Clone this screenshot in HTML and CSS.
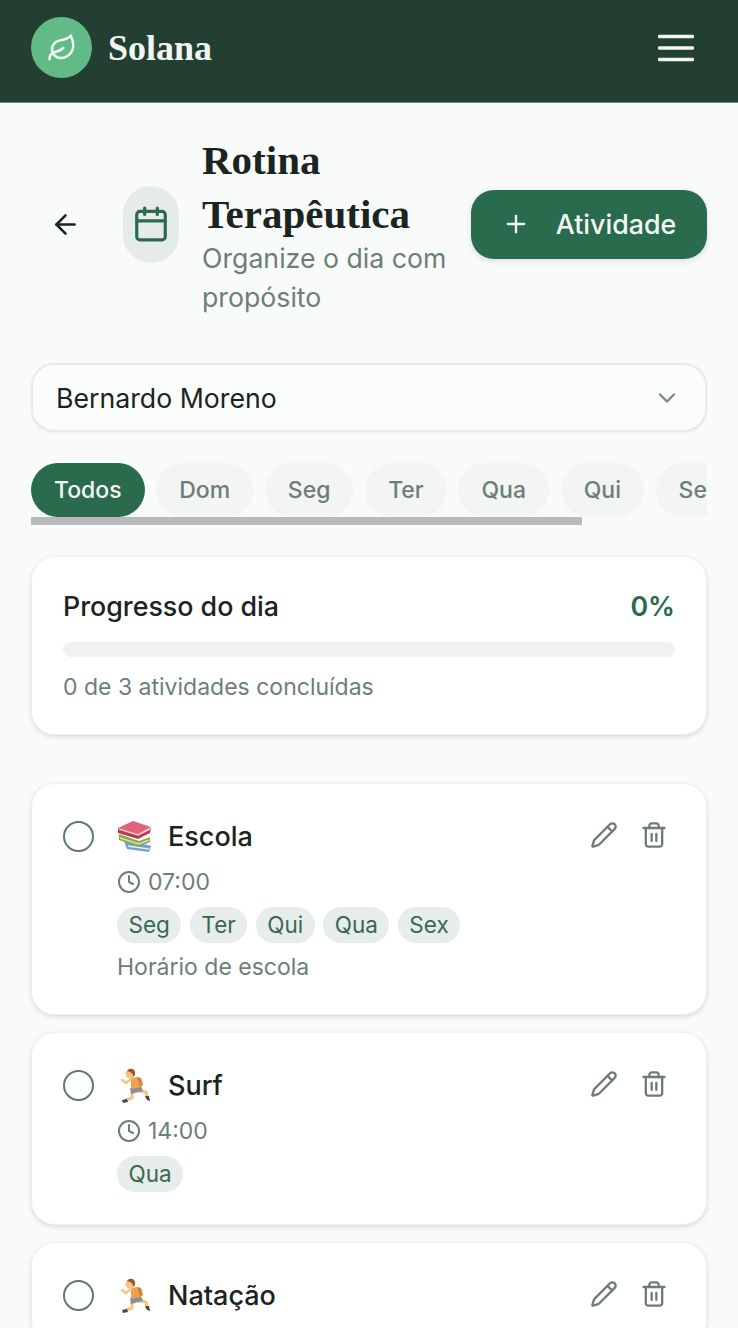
FILE: index.html
```html
<!DOCTYPE html>
<html lang="pt-BR">
<head>
  <meta charset="UTF-8" />
  <meta name="viewport" content="width=device-width, initial-scale=1.0"/>
  <title>Solana</title>
  <link rel="stylesheet" href="styles.css">
</head>
<body>
  <svg class="sprites" width="0" height="0">
    <symbol id="i-pencil" viewBox="0 0 24 24"><path d="M21.174 6.812a1 1 0 0 0-3.986-3.987L3.842 16.174a2 2 0 0 0-.5.83l-1.321 4.352a.5.5 0 0 0 .623.622l4.353-1.32a2 2 0 0 0 .83-.497z"/><path d="m15 5 4 4"/></symbol>
    <symbol id="i-trash" viewBox="0 0 24 24"><path d="M3 6h18"/><path d="M19 6v14c0 1-1 2-2 2H7c-1 0-2-1-2-2V6"/><path d="M8 6V4c0-1 1-2 2-2h4c1 0 2 1 2 2v2"/><path d="M10 11v6"/><path d="M14 11v6"/></symbol>
    <symbol id="i-clock" viewBox="0 0 24 24"><circle cx="12" cy="12" r="10"/><path d="M12 6v6l4 2"/></symbol>
    <symbol id="e-runner" viewBox="0 0 36 36">
      <path d="M15 25l0 6-6 2" fill="none" stroke="#f7c483" stroke-width="3" stroke-linecap="round" stroke-linejoin="round"/>
      <path d="M22 24l7 1 1 5" fill="none" stroke="#f7c483" stroke-width="3" stroke-linecap="round" stroke-linejoin="round"/>
      <path d="M5 33l5-1 1 3-5 1z" fill="#54463a"/>
      <path d="M28 29l4 0 1 5-3-1z" fill="#54463a"/>
      <path d="M13 21l11-2 2 5-12 3z" fill="#8d8d96"/>
      <path d="M14 11l7-1 1 1 2 9-10 2z" fill="#f0a050"/>
      <path d="M20 10l4 1 2 7-3 2z" fill="#d9803a"/>
      <path d="M14 12l-5 4-4-3" fill="none" stroke="#f7c483" stroke-width="2.400" stroke-linecap="round" stroke-linejoin="round"/>
      <circle cx="13" cy="7" r="4.500" fill="#f7c483"/>
      <path d="M10 4c2-3 7-3 8 1 .6 2-.6 4-1.500 5-.5-3-2-5-6.500-6z" fill="#a0522d"/>
    </symbol>
  </svg>

  <div class="screen">
    <header class="topbar">
      <div class="brand">
        <span class="brand-logo">
          <svg viewBox="0 0 24 24" class="stroke-icon"><path d="M11 20A7 7 0 0 1 9.8 6.1C15.5 5 17 4.48 19 2c1 2 2 4.18 2 8 0 5.5-4.78 10-10 10Z"/><path d="M2 21c0-3 1.85-5.36 5.08-6C9.5 14.52 12 13 13 12"/></svg>
        </span>
        <span class="brand-name">Solana</span>
      </div>
      <button class="menu-btn" aria-label="Menu">
        <svg viewBox="0 0 36 28" class="stroke-icon"><path d="M1.500 2.500h33"/><path d="M1.500 14h33"/><path d="M1.500 25.500h33"/></svg>
      </button>
    </header>

    <main class="content">
      <section class="page-head">
        <button class="back-btn" aria-label="Voltar">
          <svg viewBox="0 0 24 24" class="stroke-icon"><path d="m12 19-7-7 7-7"/><path d="M19 12H5"/></svg>
        </button>
        <span class="head-icon">
          <svg viewBox="0 0 24 24" class="stroke-icon"><path d="M8 2v4"/><path d="M16 2v4"/><rect x="3" y="4" width="18" height="18" rx="2"/><path d="M3 10h18"/></svg>
        </span>
        <div class="head-text">
          <h1>Rotina Terapêutica</h1>
          <p>Organize o dia com propósito</p>
        </div>
        <button class="add-btn">
          <svg viewBox="0 0 24 24" class="stroke-icon"><path d="M5 12h14"/><path d="M12 5v14"/></svg>
          Atividade
        </button>
      </section>

      <div class="person-select">
        <span>Bernardo Moreno</span>
        <svg viewBox="0 0 24 24" class="stroke-icon"><path d="m6 9 6 6 6-6"/></svg>
      </div>

      <div class="day-filter">
        <div class="day-list">
          <button class="day active">Todos</button>
          <button class="day">Dom</button>
          <button class="day">Seg</button>
          <button class="day">Ter</button>
          <button class="day">Qua</button>
          <button class="day">Qui</button>
          <button class="day">Sex</button>
        </div>
        <div class="day-scroll"></div>
      </div>

      <section class="card progress-card">
        <div class="progress-top">
          <span>Progresso do dia</span>
          <strong>0%</strong>
        </div>
        <div class="progress-track"></div>
        <p class="muted">0 de 3 atividades concluídas</p>
      </section>

      <div class="activities">
        <article class="card activity">
          <span class="check"></span>
          <div class="activity-body">
            <div class="activity-title">
              <svg viewBox="0 0 36 32" class="emoji">
                <path d="M7 21l24 4 3 1-2 6-22-3z" fill="#6f9fd8"/>
                <path d="M11 26l21 3" stroke="#e9eef2" stroke-width="1.500"/>
                <path d="M2 14l20 7 11-4 0 5-11 5-20-7z" fill="#87ab55"/>
                <path d="M3 18l19 6 10-4" fill="none" stroke="#e8d9a8" stroke-width="1.500"/>
                <path d="M1 8l20 6 13-6-1 5-12 6-20-6z" fill="#b93a55"/>
                <path d="M2 9l19 6 12-6" fill="none" stroke="#f1d9c9" stroke-width="1.500"/>
                <path d="M1 8l15-7 18 6-13 7z" fill="#e4607c"/>
              </svg>
              <h2>Escola</h2>
            </div>
            <div class="activity-time"><svg class="stroke-icon"><use href="#i-clock"/></svg>07:00</div>
            <div class="tags">
              <span>Seg</span><span>Ter</span><span>Qui</span><span>Qua</span><span>Sex</span>
            </div>
            <p class="muted note">Horário de escola</p>
          </div>
          <div class="activity-actions">
            <svg class="stroke-icon"><use href="#i-pencil"/></svg>
            <svg class="stroke-icon"><use href="#i-trash"/></svg>
          </div>
        </article>

        <article class="card activity">
          <span class="check"></span>
          <div class="activity-body">
            <div class="activity-title">
              <svg class="emoji runner"><use href="#e-runner"/></svg>
              <h2>Surf</h2>
            </div>
            <div class="activity-time"><svg class="stroke-icon"><use href="#i-clock"/></svg>14:00</div>
            <div class="tags">
              <span>Qua</span>
            </div>
          </div>
          <div class="activity-actions">
            <svg class="stroke-icon"><use href="#i-pencil"/></svg>
            <svg class="stroke-icon"><use href="#i-trash"/></svg>
          </div>
        </article>

        <article class="card activity">
          <span class="check"></span>
          <div class="activity-body">
            <div class="activity-title">
              <svg class="emoji runner"><use href="#e-runner"/></svg>
              <h2>Natação</h2>
            </div>
          </div>
          <div class="activity-actions">
            <svg class="stroke-icon"><use href="#i-pencil"/></svg>
            <svg class="stroke-icon"><use href="#i-trash"/></svg>
          </div>
        </article>
      </div>
    </main>
  </div>
</body>
</html>
```

FILE: styles.css
```css
:root {
  --bg-color: #f9fbfa;
  --dark-green: #233f31;
  --green: #2a6a4d;
  --text-color: #1a2420;
  --muted: #6c7f76;
  --soft: #e6edea;
  --line: #e7ebe9;
}

html, body {
  margin: 0;
  padding: 0;
  height: 100%;
  overflow: hidden;
  font-family: Inter, "Noto Sans", sans-serif;
  background-color: var(--bg-color);
  color: var(--text-color);
}

button {
  font-family: inherit;
  border: none;
  background: none;
  padding: 0;
}

.sprites {
  position: absolute;
}

.stroke-icon {
  fill: none;
  stroke: currentColor;
  stroke-width: 2;
  stroke-linecap: round;
  stroke-linejoin: round;
}

.screen {
  height: 1328px;
  overflow: hidden;
}

/* barra do topo */
.topbar {
  height: 103px;
  box-sizing: border-box;
  display: flex;
  align-items: center;
  justify-content: space-between;
  padding: 0 44px 7px 31px;
  background-color: var(--dark-green);
  border-bottom: 1px solid #6f8a7c;
}

.brand {
  display: flex;
  align-items: center;
  gap: 16px;
}

.brand-logo {
  width: 61px;
  height: 61px;
  border-radius: 50%;
  background-color: #62bb87;
  color: #f3faf6;
  display: flex;
  align-items: center;
  justify-content: center;
}

.brand-logo svg {
  width: 30px;
  height: 30px;
}

.brand-name {
  font-family: "Liberation Serif", serif;
  font-weight: 700;
  font-size: 36px;
  color: #f2f6f3;
}

.menu-btn {
  width: 36px;
  height: 28px;
  color: #f2f6f3;
  display: flex;
}

.menu-btn svg {
  width: 36px;
  height: 28px;
  stroke-width: 3.500;
}

.content {
  padding: 0 31px;
}

/* cabecalho da pagina */
.page-head {
  display: flex;
  align-items: center;
  height: 180px;
  margin-top: 31px;
}

.back-btn {
  width: 68px;
  height: 44px;
  flex: none;
  color: var(--text-color);
  display: flex;
  align-items: center;
  justify-content: center;
}

.back-btn svg {
  width: 31px;
  height: 31px;
}

.head-icon {
  width: 56px;
  height: 77px;
  flex: none;
  margin-left: 24px;
  border-radius: 28px;
  background-color: #e5ebe8;
  color: var(--green);
  display: flex;
  align-items: center;
  justify-content: center;
}

.head-icon svg {
  width: 38px;
  height: 38px;
}

.head-text {
  width: 245px;
  flex: none;
  margin-left: 23px;
}

.head-text h1 {
  margin: 0 0 -2px;
  padding-top: 2px;
  font-family: "Liberation Serif", serif;
  font-weight: 700;
  font-size: 41px;
  line-height: 54px;
}

.head-text p {
  margin: 0;
  font-size: 26.700px;
  line-height: 39px;
  color: var(--muted);
}

.add-btn {
  width: 236px;
  height: 69px;
  flex: none;
  margin-left: 24px;
  border-radius: 23px;
  background-color: var(--green);
  color: #f2f8f4;
  font-size: 26.800px;
  font-weight: 500;
  display: flex;
  align-items: center;
  justify-content: center;
  gap: 26px;
  box-shadow: 0 2px 6px rgba(0, 0, 0, 0.12);
}

.add-btn svg {
  width: 28px;
  height: 28px;
}

/* seletor de pessoa */
.person-select {
  height: 69px;
  box-sizing: border-box;
  margin-top: 49px;
  padding: 0 24px 0 23px;
  display: flex;
  align-items: center;
  justify-content: space-between;
  background-color: #fbfdfc;
  border: 2px solid var(--line);
  border-radius: 23px;
  font-size: 26.700px;
  box-shadow: 0 1px 3px rgba(0, 0, 0, 0.05);
}

.person-select svg {
  width: 28px;
  height: 28px;
  color: #7a8a83;
}

/* dias */
.day-filter {
  margin-top: 31px;
}

.day-list {
  display: flex;
  gap: 11.670px;
  overflow: hidden;
}

.day {
  flex: none;
  height: 54px;
  padding: 0 23px;
  border-radius: 27px;
  background-color: #f3f4f4;
  color: var(--muted);
  font-size: 23px;
  font-weight: 500;
}

.day.active {
  background-color: var(--green);
  color: #f2f8f4;
}

.day-scroll {
  width: 551px;
  height: 8px;
  background-color: #b9b9b9;
}

/* cards */
.card {
  background-color: #fff;
  border: 1px solid #eef1ef;
  border-radius: 24px;
  box-sizing: border-box;
  box-shadow: 0 2px 5px rgba(0, 0, 0, 0.12);
}

.muted {
  margin: 0;
  color: var(--muted);
  font-size: 23px;
}

.progress-card {
  height: 179px;
  margin-top: 31px;
  padding: 31px 31px 0;
}

.progress-top {
  display: flex;
  align-items: center;
  justify-content: space-between;
  height: 36px;
  font-size: 26.800px;
  font-weight: 500;
}

.progress-top strong {
  color: var(--green);
  font-weight: 600;
}

.progress-track {
  height: 15px;
  margin-top: 18px;
  border-radius: 8px;
  background-color: #f0f2f1;
}

.progress-card .muted {
  margin-top: 16px;
}

.activities {
  display: flex;
  flex-direction: column;
  gap: 17px;
  margin-top: 48px;
}

.activity {
  display: flex;
  padding: 35px 31px 32px;
}

.check {
  width: 31px;
  height: 31px;
  flex: none;
  box-sizing: border-box;
  margin-top: 2px;
  border: 2px solid #5f7a6d;
  border-radius: 50%;
  margin-right: 23px;
}

.activity-body {
  flex: 1;
}

.activity-title {
  display: flex;
  align-items: center;
  gap: 15px;
  height: 34px;
}

.emoji {
  width: 36px;
  height: 32px;
  flex: none;
}

.emoji.runner {
  height: 36px;
}

.activity-title h2 {
  margin: 0;
  font-size: 27px;
  font-weight: 500;
}

.activity-time {
  display: flex;
  align-items: center;
  gap: 7px;
  margin-top: 14px;
  color: var(--muted);
  font-size: 23px;
  line-height: 30px;
}

.activity-time svg {
  width: 24px;
  height: 24px;
}

.tags {
  display: flex;
  gap: 8.500px;
  margin-top: 10px;
}

.tags span {
  height: 36px;
  padding: 0 11.500px;
  border-radius: 18px;
  background-color: var(--soft);
  color: #3a6852;
  font-size: 22.500px;
  line-height: 36px;
}

.note {
  margin-top: 10px;
  margin-bottom: 1px;
  line-height: 28px;
}

.activity-actions {
  display: flex;
  align-items: flex-start;
  gap: 22px;
  margin: 2px 7px 0 0;
  color: #6f7b76;
}

.activity-actions svg {
  width: 28px;
  height: 28px;
}
```
